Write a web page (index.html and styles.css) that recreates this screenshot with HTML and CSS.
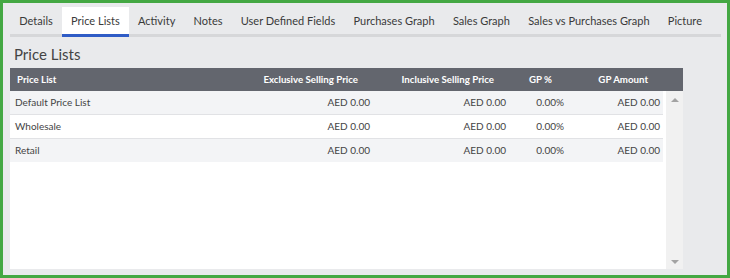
FILE: index.html
```html
<!DOCTYPE html>
<html lang="en">

<head>
    <meta charset="UTF-8">
    <title>Item - Price Lists</title>
    <link rel="stylesheet" href="styles.css">
</head>

<body>
    <div class="panel">
        <ul class="tabs">
            <li>Details</li>
            <li class="active">Price Lists</li>
            <li>Activity</li>
            <li>Notes</li>
            <li>User Defined Fields</li>
            <li>Purchases Graph</li>
            <li>Sales Graph</li>
            <li>Sales vs Purchases Graph</li>
            <li>Picture</li>
        </ul>

        <h2 class="title">Price Lists</h2>

        <div class="grid">
            <div class="grid-head">
                <div class="col-name">Price List</div>
                <div>Exclusive Selling Price</div>
                <div>Inclusive Selling Price</div>
                <div>GP %</div>
                <div>GP Amount</div>
            </div>
            <div class="grid-body">
                <div class="rows">
                    <div class="row">
                        <div class="col-name">Default Price List</div>
                        <div>AED 0.00</div>
                        <div>AED 0.00</div>
                        <div>0.00%</div>
                        <div>AED 0.00</div>
                    </div>
                    <div class="row">
                        <div class="col-name">Wholesale</div>
                        <div>AED 0.00</div>
                        <div>AED 0.00</div>
                        <div>0.00%</div>
                        <div>AED 0.00</div>
                    </div>
                    <div class="row">
                        <div class="col-name">Retail</div>
                        <div>AED 0.00</div>
                        <div>AED 0.00</div>
                        <div>0.00%</div>
                        <div>AED 0.00</div>
                    </div>
                </div>
                <div class="scrollbar">
                    <span class="arrow up"></span>
                    <span class="arrow down"></span>
                </div>
            </div>
        </div>
    </div>
</body>

</html>
```

FILE: styles.css
```css
body {
    margin: 0;
    font-family: Lato, "Liberation Sans", sans-serif;
    color: #333;
}

.panel {
    width: 730px;
    height: 278px;
    box-sizing: border-box;
    border: 3px solid #44a843;
    background-color: #e9eaec;
    padding: 4px 6px 6px 7px;
    display: flex;
    flex-direction: column;
}

.tabs {
    list-style: none;
    margin: 0;
    padding: 0;
    display: flex;
    border-bottom: 3px solid #d6d7d9;
    width: 711px;
}

.tabs li {
    flex-shrink: 0;
    white-space: nowrap;
    padding: 0 9px 0 9.3px;
    height: 27px;
    line-height: 28px;
    font-size: 11px;
    color: #3a3a3a;
    margin-bottom: -3px;
    border-bottom: 3px solid transparent;
}

.tabs li.active {
    background-color: #fff;
    border-bottom-color: #2f5cc6;
}

.title {
    margin: 0;
    padding: 7px 0 0 4px;
    height: 24px;
    font-size: 15px;
    font-weight: normal;
    color: #444;
    line-height: 20px;
}

.grid {
    flex: 1;
    display: flex;
    flex-direction: column;
    width: 673px;
}

.grid-head,
.row {
    display: grid;
    grid-template-columns: 240px 123px 136px 58px 96px;
    font-size: 10px;
    white-space: nowrap;
}

.grid-head {
    grid-template-columns: 240px 123px 136px 58px 96px 20px;
    background-color: #63666e;
    color: #fff;
    font-weight: bold;
    font-size: 9.7px;
    height: 23px;
    line-height: 23px;
}

.grid-head div {
    text-align: right;
    padding-right: 15px;
}

.grid-head .col-name {
    text-align: left;
    padding-left: 7px;
}

.grid-body {
    flex: 1;
    display: flex;
    background-color: #fff;
}

.rows {
    width: 656px;
}

.row {
    width: 653px;
    height: 23px;
    line-height: 23px;
    background-color: #f3f4f6;
    border-bottom: 1px solid #e1e2e5;
    color: #444;
}

.row:nth-child(even) {
    background-color: #fff;
}

.row:last-child {
    border-bottom: none;
}

.row div {
    text-align: right;
    padding-right: 3px;
}

.row .col-name {
    text-align: left;
    padding-left: 5px;
}

.scrollbar {
    width: 17px;
    background-color: #f1f1f1;
    display: flex;
    flex-direction: column;
    justify-content: space-between;
    align-items: center;
    padding: 7px 0 5px;
}

.arrow {
    width: 0;
    height: 0;
    border-left: 4px solid transparent;
    border-right: 4px solid transparent;
}

.arrow.up {
    border-bottom: 4px solid #a3a3a3;
}

.arrow.down {
    border-top: 4px solid #a3a3a3;
}
```
